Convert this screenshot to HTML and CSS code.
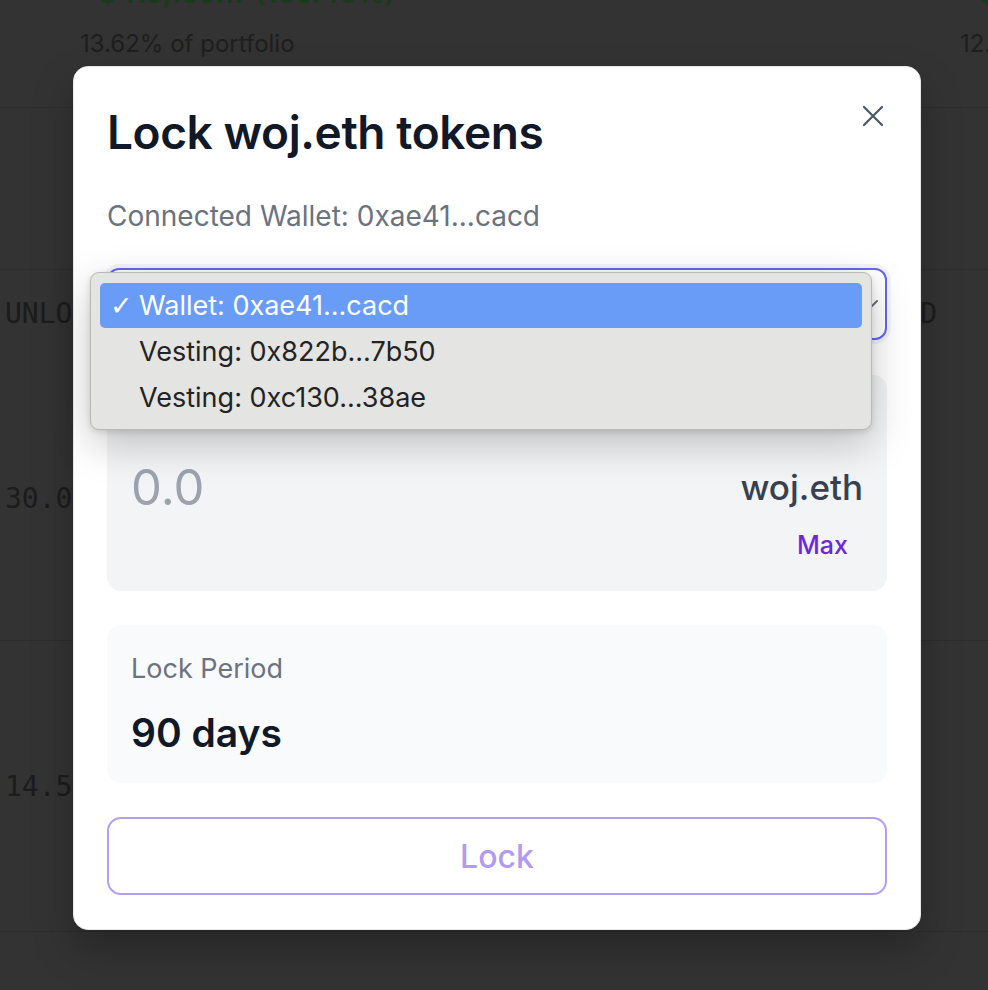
FILE: index.html
```html
<!DOCTYPE html>
<html>
<head>
<meta charset="utf-8">
<link rel="stylesheet" href="styles.css">
</head>
<body>
<div class="page">
  <div class="stat-row">
    <div class="stat">
      <div class="gain">+$ 115,150.17 (166.40%)</div>
      <div class="sub">13.62% of portfolio</div>
    </div>
    <div class="stat stat-right">
      <div class="gain">+$ 4,210.05</div>
      <div class="sub">12.48% of portfolio</div>
    </div>
  </div>
  <div class="gap-section"></div>
  <div class="table">
    <div class="trow thead">
      <div class="cell">UNLOCKED</div>
      <div class="cell cell-right">LOCKED</div>
    </div>
    <div class="trow tbody">
      <div class="cell">30.00</div>
    </div>
    <div class="trow tbody last">
      <div class="cell">14.50</div>
    </div>
  </div>
</div>

<div class="modal">
  <div class="modal-head">
    <h2 class="title">Lock woj.eth tokens</h2>
    <button class="close" aria-label="Close">
      <svg width="22" height="22" viewBox="0 0 22 22"><path d="M2 2 L20 20 M20 2 L2 20" stroke="#4b5563" stroke-width="2.2" stroke-linecap="round" fill="none"/></svg>
    </button>
  </div>
  <p class="connected">Connected Wallet: 0xae41...cacd</p>

  <div class="select-wrap">
    <div class="select">
      <span class="select-text">Wallet: 0xae41...cacd</span>
      <svg class="chev" width="18" height="12" viewBox="0 0 18 12"><path d="M2 2 L9 9 L16 2" stroke="#6b7280" stroke-width="2" fill="none" stroke-linecap="round" stroke-linejoin="round"/></svg>
    </div>
    <div class="menu">
      <div class="opt opt-sel"><span class="check">✓</span>Wallet: 0xae41...cacd</div>
      <div class="opt"><span class="check"></span>Vesting: 0x822b...7b50</div>
      <div class="opt"><span class="check"></span>Vesting: 0xc130...38ae</div>
    </div>
  </div>

  <div class="card card-amount">
    <div class="label">Amount</div>
    <div class="amount-row">
      <span class="amount">0.0</span>
      <span class="token">woj.eth</span>
    </div>
    <div class="max-row"><span class="max">Max</span></div>
  </div>

  <div class="card card-period">
    <div class="label">Lock Period</div>
    <div class="period">90 days</div>
  </div>

  <button class="lock-btn">Lock</button>
</div>
</body>
</html>
```
FILE: styles.css
```css
* { box-sizing: border-box; }
html, body { margin: 0; padding: 0; }
body {
  width: 988px;
  height: 990px;
  overflow: hidden;
  background: #333333;
  font-family: Inter, "Noto Sans", sans-serif;
  position: relative;
}

/* background page */
.page { color: #1d1d1d; }
.stat-row {
  display: flex;
  justify-content: space-between;
  padding-left: 80px;
  margin-top: -22px;
  height: 130px;
  border-bottom: 1px solid #2d2d2d;
}
.stat { display: flex; flex-direction: column; gap: 18px; }
.stat-right { width: 28px; overflow: hidden; white-space: nowrap; }
.gain {
  font-size: 27px;
  line-height: 32px;
  font-weight: 700;
  color: #1a3a1c;
  white-space: nowrap;
}
.sub {
  font-size: 24px;
  line-height: 32px;
  color: #1e1e1e;
  white-space: nowrap;
}
.gap-section { height: 161px; }
.table { border-top: 1px solid #2d2d2d; }
.trow {
  display: flex;
  justify-content: space-between;
  align-items: center;
  padding: 0 51px 0 5px;
  font-family: "DejaVu Sans Mono", "Liberation Mono", monospace;
  font-size: 28px;
  color: #1c1c1c;
}
.thead { height: 86px; }
.tbody { height: 285px; border-bottom: 1px solid #2d2d2d; }
.tbody.last { height: 291px; }
.cell-right { text-align: right; }

/* modal */
.modal {
  position: absolute;
  left: 73px;
  top: 66px;
  width: 848px;
  height: 864px;
  background: #ffffff;
  border-radius: 15px;
  border: 1px solid #e5e7eb;
  padding: 34px 33px 34px 33px;
  display: flex;
  flex-direction: column;
  box-shadow: 0 20px 40px rgba(0,0,0,0.25);
}
.modal-head {
  display: flex;
  justify-content: space-between;
  align-items: flex-start;
}
.title {
  margin: 0;
  font-size: 46px;
  line-height: 62px;
  font-weight: 600;
  letter-spacing: -0.4px;
  color: #111827;
}
.close {
  border: 0;
  background: transparent;
  padding: 0;
  margin-top: 4px;
  margin-right: 3px;
  width: 22px;
  height: 22px;
  display: flex;
}
.connected {
  margin: 35px 0 0 0;
  font-size: 28px;
  line-height: 36px;
  color: #6b7280;
}
.select-wrap {
  position: relative;
  margin-top: 34px;
}
.select {
  height: 72px;
  border: 2px solid #6366f1;
  border-radius: 12px;
  display: flex;
  align-items: center;
  justify-content: space-between;
  padding: 0 6px 0 22px;
  font-size: 26px;
  color: #111827;
  box-shadow: 0 0 0 4px rgba(99,102,241,0.08);
}
.chev { margin-top: 2px; }
.menu {
  position: absolute;
  left: -17px;
  top: 4px;
  width: 782px;
  height: 158px;
  background: #e4e4e2;
  border: 1px solid #b9b9b7;
  border-radius: 9px;
  padding: 10px 9px;
  box-shadow: 0 14px 40px rgba(0,0,0,0.22), 0 2px 6px rgba(0,0,0,0.12);
  z-index: 5;
}
.opt {
  height: 46px;
  display: flex;
  align-items: center;
  padding-left: 10px;
  font-size: 27px;
  color: #232323;
  font-family: Inter, "Noto Sans", sans-serif;
}
.opt-sel {
  height: 45px;
  background: #699cf7;
  color: #ffffff;
  border-radius: 5px;
}
.check {
  width: 29px;
  display: inline-block;
  font-size: 27px;
  font-family: "DejaVu Sans", sans-serif;
}
.card {
  border-radius: 14px;
  padding: 24px 24px;
}
.card-amount {
  margin-top: 35px;
  height: 216px;
  background: #f3f4f6;
}
.card-period {
  margin-top: 34px;
  height: 158px;
  background: #f9fafb;
}
.label {
  font-size: 27px;
  line-height: 40px;
  color: #6b7280;
}
.amount-row {
  margin-top: 18px;
  height: 60px;
  display: flex;
  justify-content: space-between;
  align-items: center;
}
.amount {
  font-size: 49px;
  color: #9ca3af;
  font-weight: 400;
}
.token {
  font-size: 35px;
  font-weight: 500;
  color: #374151;
}
.max-row {
  margin-top: 11px;
  display: flex;
  justify-content: flex-end;
  padding-right: 15px;
}
.max {
  font-size: 25px;
  line-height: 34px;
  font-weight: 500;
  color: #6d28d9;
}
.period {
  margin-top: 19px;
  font-size: 39px;
  line-height: 50px;
  font-weight: 600;
  color: #111827;
}
.lock-btn {
  margin-top: 34px;
  height: 78px;
  border: 2px solid #b39ef0;
  border-radius: 14px;
  background: #ffffff;
  font-family: Inter, "Noto Sans", sans-serif;
  font-size: 32px;
  font-weight: 500;
  color: #b39af0;
}
```
